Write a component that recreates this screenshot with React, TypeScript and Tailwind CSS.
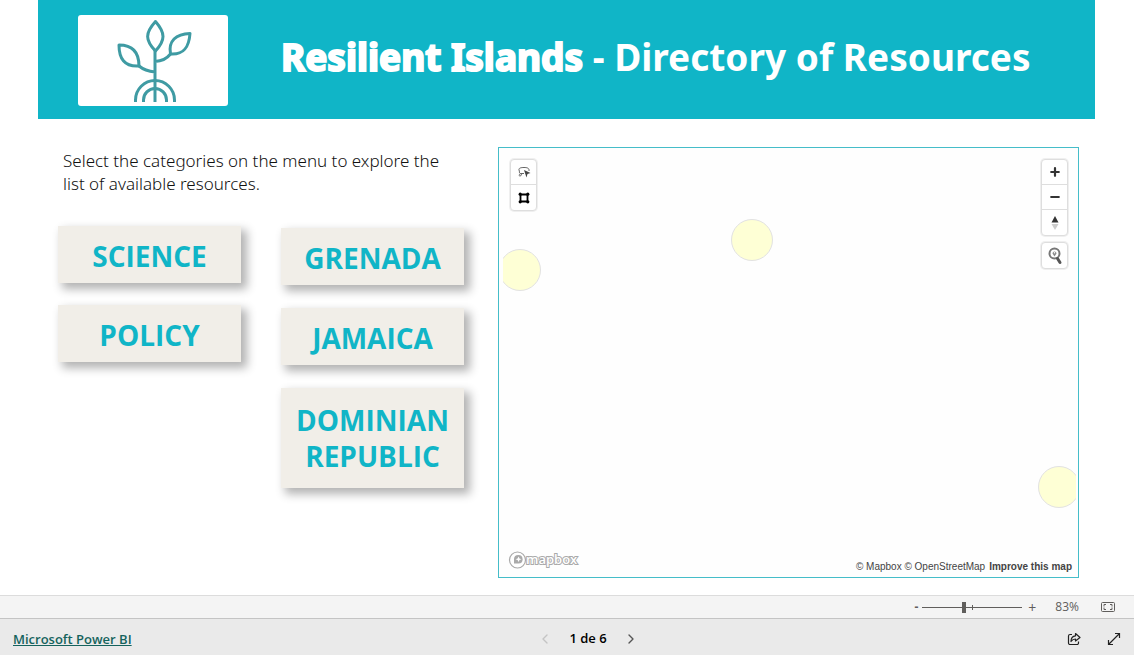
import { useState } from 'react'
import { clsx } from 'clsx'
import { ChevronLeft, ChevronRight } from 'lucide-react'

const topics = ['SCIENCE', 'POLICY']
const countries = ['GRENADA', 'JAMAICA', 'DOMINIAN REPUBLIC']

const markers = [
  { name: 'Jamaica', className: 'left-[3%] top-[28.5%]' },
  { name: 'Dominican Republic', className: 'left-[43.5%] top-[21.5%]' },
  { name: 'Grenada', className: 'left-[97%] top-[79%]' },
]

function PlantLogo() {
  return (
    <svg viewBox="0 0 150 91" className="h-[91px] w-[150px]" fill="none" stroke="#3f9ba3" strokeWidth="3">
      <path d="M77.500 6.500C67 18 67 25 77.500 36C87.500 25 87.500 18 77.500 6.500Z" strokeLinejoin="round" />
      <path d="M41 30C41 43 46 52 61 51C61 38 55 30 41 30Z" strokeLinejoin="round" />
      <path d="M112 18.500C98 19 90 26 92.500 39C106 40 111 32 112 18.500Z" strokeLinejoin="round" />
      <path d="M77 35V87M61 51Q67 56 77 57M92.500 39Q87 46 77 46.500" />
      <path d="M57.500 87V85A19.500 19.500 0 0 1 96.500 85V87M65.500 87V85A11.500 11.500 0 0 1 88.500 85V87" />
    </svg>
  )
}

function CategoryButton({ label }: { label: string }) {
  const isLong = label.length > 12

  return (
    <button
      type="button"
      className={clsx(
        'w-full bg-[#f1eee8] px-3 text-[28px] font-bold text-[#10b5c7] shadow-[5px_5px_9px_1px_rgba(0,0,0,0.3)]',
        isLong ? 'pt-[14px] pb-[14px] leading-[36px]' : 'pt-3 pb-2 leading-[37px]'
      )}
    >
      {label}
    </button>
  )
}

function MapButton({ label, children }: { label: string; children: React.ReactNode }) {
  return (
    <button type="button" aria-label={label} className="flex h-[25px] w-[25px] items-center justify-center">
      {children}
    </button>
  )
}

function ResourceMap() {
  const group = 'absolute divide-y divide-[#dedede] rounded border border-[#dedede] bg-white shadow-[0_0_0_1px_rgba(0,0,0,0.06)]'

  return (
    <section aria-label="Map" className="relative flex-1 border border-[#45bdc9] bg-[#fefefe]">
      <div className="absolute inset-y-0 right-[2px] left-1 overflow-hidden">
        {markers.map((marker) => (
          <button
            key={marker.name}
            type="button"
            aria-label={marker.name}
            className={clsx(
              'absolute h-[42px] w-[42px] -translate-x-1/2 -translate-y-1/2 rounded-full border border-[#e2e2e2] bg-[#feffd5]',
              marker.className
            )}
          />
        ))}
      </div>

      <div className={clsx(group, 'top-[11px] left-[11px]')}>
        <MapButton label="Lasso select">
          <svg viewBox="0 0 14 14" className="h-3.5 w-3.5" fill="none" stroke="#666">
            <path d="M3.500 8.500C1.500 8 3 6.500 2 5C1.500 3 4 2.500 7 2.500S12.500 3 12 6M4 8.500C2 9 1.500 11 3 11C4.500 11 5 9 4 8.500H7" />
            <path d="M7 5L13.500 8L10.500 9L9.500 12.500Z" fill="#444" stroke="none" />
          </svg>
        </MapButton>
        <MapButton label="Polygon select">
          <svg viewBox="0 0 12 12" className="h-3 w-3" fill="#000">
            <path d="M2.500 2.500H9.500V9.500H2.500Z" fill="none" stroke="#000" strokeWidth="1.800" />
            <circle cx="2.200" cy="2.200" r="1.600" />
            <circle cx="9.800" cy="2.200" r="1.600" />
            <circle cx="2.200" cy="9.800" r="1.600" />
            <circle cx="9.800" cy="9.800" r="1.600" />
          </svg>
        </MapButton>
      </div>

      <div className={clsx(group, 'top-[11px] right-[10px]')}>
        <MapButton label="Zoom in">
          <svg viewBox="0 0 10 10" className="h-2.5 w-2.5" stroke="#333" strokeWidth="2.200" strokeLinecap="round">
            <path d="M1.200 5H8.800M5 1.200V8.800" />
          </svg>
        </MapButton>
        <MapButton label="Zoom out">
          <svg viewBox="0 0 10 10" className="h-2.5 w-2.5" stroke="#333" strokeWidth="2.200" strokeLinecap="round">
            <path d="M1.200 5H8.800" />
          </svg>
        </MapButton>
        <MapButton label="Reset north">
          <svg viewBox="0 0 8 16" className="h-4 w-2">
            <path d="M4 1L7.500 7.500H.5Z" fill="#333" />
            <path d="M4 15L7.500 9H.5Z" fill="#ccc" />
          </svg>
        </MapButton>
      </div>

      <div className={clsx(group, 'top-[94px] right-[10px]')}>
        <MapButton label="Search location">
          <svg viewBox="0 0 18 18" className="h-[18px] w-[18px]" fill="none" stroke="#777">
            <circle cx="8.500" cy="6.500" r="5" strokeWidth="2" />
            <path d="M11.500 11.500L14 15.500" stroke="#555" strokeWidth="3" strokeLinecap="round" />
            <path d="M8.500 9.500L6.500 6.500A2 2 0 1 1 10.500 6.500Z" fill="#888" stroke="none" />
            <circle cx="8.500" cy="5.700" r=".8" fill="#fff" stroke="none" />
          </svg>
        </MapButton>
      </div>

      <a href="#mapbox" aria-label="Mapbox" className="absolute bottom-[7px] left-[9px]">
        <svg viewBox="0 0 76 20" className="h-5 w-[76px]" fill="#fff" stroke="#aaa">
          <circle cx="9.500" cy="10" r="8" strokeWidth="1.200" />
          <path d="M6 13.500V9A4.300 4.300 0 1 1 10.500 13.500Z" fill="#aaa" stroke="none" />
          <path d="M10.500 6.500L11.500 8.500L13.500 9.300L11.500 10.100L10.500 12.100L9.600 10.100L7.500 9.300L9.600 8.500Z" stroke="none" />
          <text
            x="18"
            y="14"
            strokeWidth="2"
            paintOrder="stroke"
            className="font-['Open_Sans',sans-serif] text-[13px] font-semibold"
          >
            mapbox
          </text>
        </svg>
      </a>

      <div className="absolute right-[6px] bottom-[3px] flex gap-1 font-['Liberation_Sans',Arial,sans-serif] text-[10px] leading-[14px] text-[#444]">
        <span>
          <a href="#about">© Mapbox</a> <a href="#osm">© OpenStreetMap</a>
        </span>
        <a href="#improve" className="font-bold">Improve this map</a>
      </div>
    </section>
  )
}

export default function App() {
  const [zoom, setZoom] = useState(83)
  const [page, setPage] = useState(1)

  return (
    <div className="flex min-h-screen flex-col bg-white font-['Open_Sans','Noto_Sans',sans-serif]">
      {/* Report header */}
      <header className="mr-[39px] ml-[38px] flex items-center gap-[53px] bg-[#10b5c7] pt-[15px] pb-[13px] pl-10 text-white">
        <div className="shrink-0 overflow-hidden rounded-[3px] bg-white">
          <PlantLogo />
        </div>
        <h1 className="pb-2 font-['Noto_Sans',sans-serif] text-[37px] leading-[48px] font-bold">
          <span className="[-webkit-text-stroke:2px_white]">Resilient Islands</span> - Directory of Resources
        </h1>
      </header>

      {/* Categories and map */}
      <main className="flex flex-1 pt-7 pr-[55px] pb-[17px] pl-[58px]">
        <div className="mr-[34px] w-[406px] shrink-0">
          <p className="pt-[2px] pr-5 pl-[5px] font-['Noto_Sans',sans-serif] text-[17px] leading-[23px] font-light text-[#111]">
            Select the categories on the menu to explore the list of available resources.
          </p>
          <nav aria-label="Categories" className="mt-[31px] grid grid-cols-2 items-start gap-x-10">
            <div className="grid gap-[22px]">
              {topics.map((label) => (
                <CategoryButton key={label} label={label} />
              ))}
            </div>
            <div className="grid gap-[23px] pt-[2px]">
              {countries.map((label) => (
                <CategoryButton key={label} label={label} />
              ))}
            </div>
          </nav>
        </div>
        <ResourceMap />
      </main>

      {/* Zoom bar */}
      <div className="flex h-6 items-center justify-end border-y border-t-[#dcdcdc] border-b-[#c4c4c4] bg-[#f4f4f4] pr-[19px] text-[12px] text-[#605e5c]">
        <button type="button" aria-label="Zoom out" onClick={() => setZoom(zoom - 1)} className="mr-1 font-bold">-</button>
        <div className="relative flex h-4 w-[100px] items-center">
          <span className="absolute left-1/2 h-[5px] w-px bg-[#605e5c]" />
          <input
            type="range"
            aria-label="Zoom"
            min={0}
            max={200}
            value={zoom}
            onChange={(e) => setZoom(Number(e.target.value))}
            className="relative h-px w-full appearance-none bg-[#605e5c] [&::-webkit-slider-thumb]:h-[11px] [&::-webkit-slider-thumb]:w-1 [&::-webkit-slider-thumb]:appearance-none [&::-webkit-slider-thumb]:bg-[#605e5c]"
          />
        </div>
        <button type="button" aria-label="Zoom in" onClick={() => setZoom(zoom + 1)} className="ml-1.5 text-[14px]">+</button>
        <span className="ml-[19px]">{zoom}%</span>
        <button type="button" aria-label="Fit to page" className="ml-[22px]">
          <svg viewBox="0 0 14 10" className="h-2.5 w-3.5" fill="none" stroke="#605e5c">
            <rect x=".5" y=".5" width="13" height="9" rx="1" />
            <path d="M5 2.500H3V4.500M9 2.500H11V4.500M5 7.500H3V5.500M9 7.500H11V5.500" />
          </svg>
        </button>
      </div>

      {/* Footer */}
      <footer className="grid h-9 grid-cols-3 items-center bg-[#eaeaea] px-[13px] pt-[3px] text-[13px]">
        <a href="#powerbi" className="pt-[2px] font-semibold text-[#15635d] underline">Microsoft Power BI</a>
        <div className="flex items-center justify-center pl-[42px] font-semibold text-black">
          <button type="button" aria-label="Previous page" disabled={page === 1} onClick={() => setPage(page - 1)} className="text-[#555] disabled:text-[#c4c4c4]">
            <ChevronLeft className="h-4 w-4" strokeWidth={2} />
          </button>
          <span className="mx-4">{page} de 6</span>
          <button type="button" aria-label="Next page" disabled={page === 6} onClick={() => setPage(page + 1)} className="text-[#555] disabled:text-[#c4c4c4]">
            <ChevronRight className="h-4 w-4" strokeWidth={2} />
          </button>
        </div>
        <div className="flex items-center justify-end gap-[26px]">
          <button type="button" aria-label="Share">
            <svg viewBox="0 0 14 14" className="h-3.5 w-3.5" fill="none" stroke="#222" strokeWidth="1.200" strokeLinejoin="round">
              <path d="M5 2.500H3A1.500 1.500 0 0 0 1.500 4V11A1.500 1.500 0 0 0 3 12.500H10A1.500 1.500 0 0 0 11.500 11V9.500" />
              <path d="M8.500 1.500L13 5.500L8.500 9V7C6 7 5 8 4 9.500C4 6 5.500 4 8.500 3.800Z" />
            </svg>
          </button>
          <button type="button" aria-label="Full screen">
            <svg viewBox="0 0 14 14" className="h-3.5 w-3.5" fill="none" stroke="#222" strokeWidth="1.200">
              <path d="M1.500 12.500L12.500 1.500M8 1.500H12.500V6M1.500 8V12.500H6" />
            </svg>
          </button>
        </div>
      </footer>
    </div>
  )
}
